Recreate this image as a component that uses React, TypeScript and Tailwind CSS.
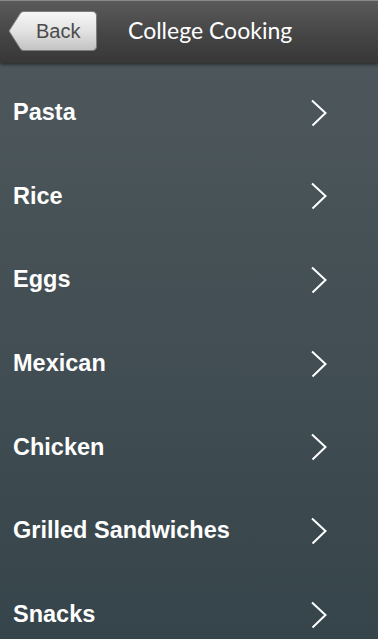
const categories = [
  "Pasta",
  "Rice",
  "Eggs",
  "Mexican",
  "Chicken",
  "Grilled Sandwiches",
  "Snacks",
];

function BackButton() {
  return (
    <button className="relative flex h-[40px] w-[89px] items-center justify-start">
      <svg className="absolute inset-0" width="89" height="40" viewBox="0 0 89 40">
        <defs>
          <linearGradient id="backFill" x1="0" y1="0" x2="0" y2="1">
            <stop offset="0" stopColor="#f7f7f7" />
            <stop offset="0.5" stopColor="#e2e2e2" />
            <stop offset="1" stopColor="#c2c2c2" />
          </linearGradient>
        </defs>
        <path
          d="M1 20 L12.5 2 Q13.5 0.5 16 0.5 L84 0.5 Q88.5 0.5 88.5 5 L88.5 35 Q88.5 39.5 84 39.5 L16 39.5 Q13.5 39.5 12.5 38 Z"
          fill="url(#backFill)"
          stroke="#7d7d7d"
          strokeWidth="1"
        />
      </svg>
      <span className="relative ml-[28px] font-['Liberation_Sans',Arial,sans-serif] text-[20px] leading-none text-[#4b4b4b]">
        Back
      </span>
    </button>
  );
}

function Chevron() {
  return (
    <svg width="18" height="28" viewBox="0 0 18 28" className="shrink-0">
      <path d="M2 1.5 L15.5 14 L2.5 26.5" fill="none" stroke="#ffffff" strokeWidth="2" strokeLinejoin="miter" />
    </svg>
  );
}

export default function App() {
  return (
    <div className="flex h-[639px] w-[378px] flex-col overflow-hidden bg-gradient-to-b from-[#50595d] to-[#36454b]">
      <header className="relative z-10 flex h-[63px] shrink-0 items-center border-t border-[#8a8a8a] bg-gradient-to-b from-[#5a5a5a] via-[#474747] to-[#373737] px-[8px] pb-[3px] shadow-[0_2px_3px_rgba(0,0,0,0.45)]">
        <BackButton />
        <h1 className="ml-[31px] mb-[1px] font-['Lato','Open_Sans',sans-serif] text-[23px] leading-none text-white">
          College Cooking
        </h1>
      </header>
      <ul className="flex flex-col pt-[8px]">
        {categories.map((c) => (
          <li
            key={c}
            className="flex h-[83.67px] items-center justify-between pl-[13px] pr-[50px]"
          >
            <span className="font-['Liberation_Sans',Arial,sans-serif] text-[23.5px] font-bold leading-none text-white">
              {c}
            </span>
            <Chevron />
          </li>
        ))}
      </ul>
    </div>
  );
}
